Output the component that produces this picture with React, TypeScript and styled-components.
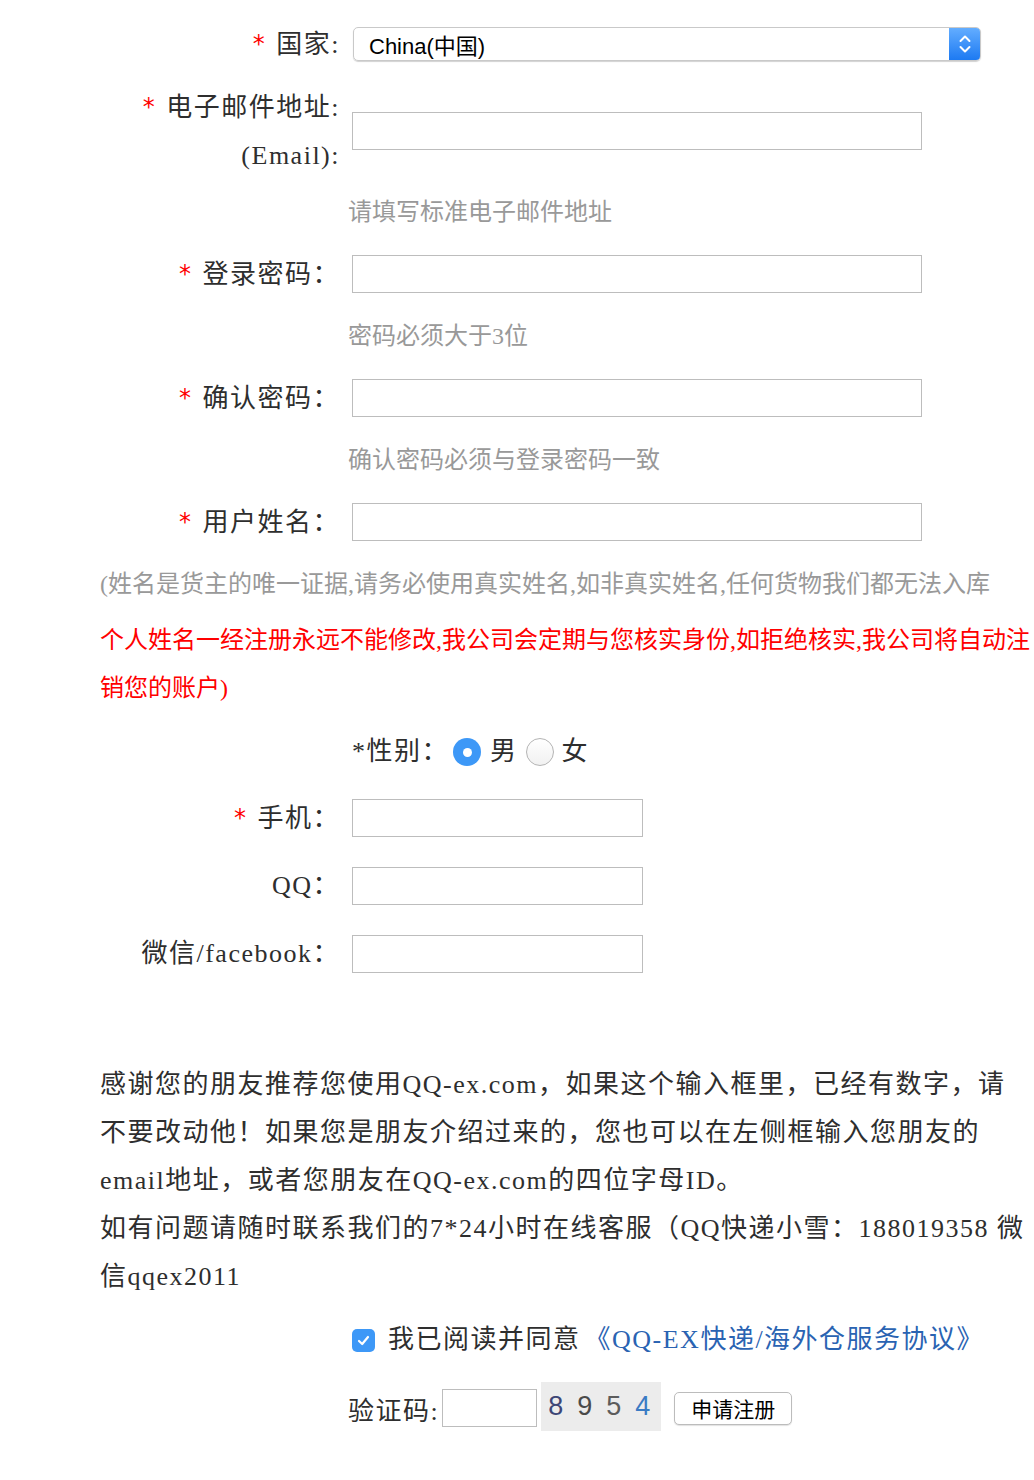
import React from 'react';
import styled, { createGlobalStyle } from 'styled-components';

const SERIF = `"Liberation Serif", "Noto Sans CJK SC", serif`;
const SANS = `"Liberation Sans", "Noto Sans CJK SC", sans-serif`;

const GlobalStyle = createGlobalStyle`
    * { box-sizing: border-box; }
    body {
        margin: 0;
        background: #fff;
        font-family: ${SERIF};
        color: #333;
    }
`;

const Page = styled.div`
    width: 1034px;
    padding: 13px 0 40px;
    display: flex;
    flex-direction: column;
`;

const Row = styled.div<{ $h: number; $pt?: number; $mt?: number }>`
    display: grid;
    grid-template-columns: 340px 1fr;
    column-gap: 12px;
    align-items: center;
    height: ${p => p.$h}px;
    padding-top: ${p => p.$pt || 0}px;
    margin-top: ${p => p.$mt || 0}px;
`;

const Label = styled.div`
    text-align: right;
    font-size: 26px;
    letter-spacing: 1.5px;
    line-height: 48px;
    color: #2e2e2e;
    white-space: nowrap;
`;

const Star = styled.span`
    font-family: "DejaVu Sans", sans-serif;
    font-size: 24px;
    color: #f00;
    margin-right: 10px;
    vertical-align: 1px;
`;

const Field = styled.div`
    grid-column: 2;
    display: flex;
    align-items: center;
`;

const Hint = styled.div`
    grid-column: 2;
    margin-left: -4px;
    font-size: 24px;
    line-height: 48px;
    color: #999;
`;

const TextInput = styled.input<{ $w: number }>`
    width: ${p => p.$w}px;
    height: 38px;
    border: 1px solid #bdbdbd;
    background: #fff;
    padding: 0 6px;
    font-size: 18px;
    outline: none;
`;

const SelectBox = styled.div`
    width: 628px;
    height: 34px;
    margin-left: 1px;
    display: flex;
    align-items: center;
    justify-content: space-between;
    border: 1px solid #c9c9c9;
    border-radius: 5px;
    box-shadow: 0 1px 1px rgba(0, 0, 0, 0.18);
    overflow: hidden;
    font-family: ${SANS};
    font-size: 22px;
    color: #000;
    padding-left: 15px;
`;

const Stepper = styled.span`
    width: 31px;
    height: 100%;
    display: flex;
    align-items: center;
    justify-content: center;
    background: linear-gradient(#63adff, #1d7af2);
`;

const Notes = styled.div`
    margin-top: 7px;
    padding-left: 100px;
    font-size: 24px;
    line-height: 48px;
`;

const NoteText = styled.p<{ $red?: boolean }>`
    margin: 0;
    color: ${p => (p.$red ? '#ff0000' : '#999')};
    & + & {
        margin-top: 8px;
    }
`;

const Choice = styled.div`
    display: flex;
    align-items: center;
    font-size: 26px;
    letter-spacing: 1.5px;
    line-height: 48px;
    color: #2e2e2e;
    white-space: nowrap;
`;

const Radio = styled.span<{ $on?: boolean; $ml: number }>`
    width: 28px;
    height: 28px;
    border-radius: 50%;
    margin: 0 ${p => (p.$on ? 9 : 8)}px 0 ${p => p.$ml}px;
    display: flex;
    align-items: center;
    justify-content: center;
    background: ${p => (p.$on ? '#3d98f7' : 'linear-gradient(#fff, #f1f1f1)')};
    border: ${p => (p.$on ? 'none' : '1px solid #b4b4b4')};
    &::after {
        content: "";
        display: ${p => (p.$on ? 'block' : 'none')};
        width: 9px;
        height: 9px;
        border-radius: 50%;
        background: #fff;
    }
`;

const Para = styled.p`
    margin: 73px 0 0;
    padding-left: 100px;
    font-size: 26px;
    letter-spacing: 1.5px;
    line-height: 48px;
    color: #2e2e2e;
    white-space: nowrap;
`;

const CheckBox = styled.span`
    width: 23px;
    height: 23px;
    border-radius: 5px;
    background: #3d98f7;
    display: flex;
    align-items: center;
    justify-content: center;
    margin-right: 13px;
`;

const AgreeLink = styled.a`
    color: #2a63b2;
    text-decoration: none;
    margin-left: 4px;
`;

const CodeLabel = styled.span`
    margin-left: -4px;
    font-size: 26px;
    letter-spacing: 1.5px;
    color: #2e2e2e;
`;

const CodeInput = styled(TextInput)`
    margin-left: 3px;
`;

const Captcha = styled.div`
    width: 120px;
    height: 49px;
    margin: -3px 0 0 4px;
    background: #ececec;
    display: flex;
    align-items: center;
    gap: 14px;
    padding-left: 7px;
    font-family: ${SANS};
    font-size: 27px;
`;

const Digit = styled.span<{ $c: string }>`
    color: ${p => p.$c};
`;

const Submit = styled.button`
    width: 118px;
    height: 33px;
    margin-left: 13px;
    border: 1px solid #bcbcbc;
    border-radius: 5px;
    background: #fff;
    box-shadow: 0 1px 1px rgba(0, 0, 0, 0.12);
    font-family: ${SANS};
    font-size: 21px;
    color: #000;
    padding: 0;
`;

const App = () => {
    return (
        <>
            <GlobalStyle />
            <Page>
                <Row $h={62}>
                    <Label><Star>*</Star>国家:</Label>
                    <Field>
                        <SelectBox>
                            <span>China(中国)</span>
                            <Stepper>
                                <svg width="14" height="22" viewBox="0 0 14 22" fill="none" stroke="#fff" strokeWidth="2" strokeLinecap="round" strokeLinejoin="round">
                                    <path d="M2.5 8 L7 3.5 L11.5 8" />
                                    <path d="M2.5 14 L7 18.5 L11.5 14" />
                                </svg>
                            </Stepper>
                        </SelectBox>
                    </Field>
                </Row>
                <Row $h={106} $pt={6}>
                    <Label><Star>*</Star>电子邮件地址:<br />(Email):</Label>
                    <Field><TextInput $w={570} /></Field>
                </Row>
                <Row $h={62}>
                    <Hint>请填写标准电子邮件地址</Hint>
                </Row>
                <Row $h={62}>
                    <Label><Star>*</Star>登录密码：</Label>
                    <Field><TextInput $w={570} type="password" /></Field>
                </Row>
                <Row $h={62}>
                    <Hint>密码必须大于3位</Hint>
                </Row>
                <Row $h={62}>
                    <Label><Star>*</Star>确认密码：</Label>
                    <Field><TextInput $w={570} type="password" /></Field>
                </Row>
                <Row $h={62}>
                    <Hint>确认密码必须与登录密码一致</Hint>
                </Row>
                <Row $h={62}>
                    <Label><Star>*</Star>用户姓名：</Label>
                    <Field><TextInput $w={570} /></Field>
                </Row>
                <Notes>
                    <NoteText>(姓名是货主的唯一证据,请务必使用真实姓名,如非真实姓名,任何货物我们都无法入库</NoteText>
                    <NoteText $red>个人姓名一经注册永远不能修改,我公司会定期与您核实身份,如拒绝核实,我公司将自动注销您的账户)</NoteText>
                </Notes>
                <Row $h={64} $mt={8}>
                    <Field>
                        <Choice>
                            *性别：
                            <Radio $on $ml={4} />男
                            <Radio $ml={8} />女
                        </Choice>
                    </Field>
                </Row>
                <Row $h={68}>
                    <Label><Star>*</Star>手机：</Label>
                    <Field><TextInput $w={291} /></Field>
                </Row>
                <Row $h={68}>
                    <Label>QQ：</Label>
                    <Field><TextInput $w={291} /></Field>
                </Row>
                <Row $h={68}>
                    <Label>微信/facebook：</Label>
                    <Field><TextInput $w={291} /></Field>
                </Row>
                <Para>
                    感谢您的朋友推荐您使用QQ-ex.com，如果这个输入框里，已经有数字，请<br />
                    不要改动他！如果您是朋友介绍过来的，您也可以在左侧框输入您朋友的<br />
                    email地址，或者您朋友在QQ-ex.com的四位字母ID。<br />
                    如有问题请随时联系我们的7*24小时在线客服（QQ快递小雪：188019358 微<br />
                    信qqex2011
                </Para>
                <Row $h={60} $mt={9}>
                    <Field>
                        <CheckBox>
                            <svg width="15" height="15" viewBox="0 0 15 15" fill="none" stroke="#fff" strokeWidth="2.2" strokeLinecap="round" strokeLinejoin="round">
                                <path d="M3 8 L6.2 11 L12 4" />
                            </svg>
                        </CheckBox>
                        <Choice>
                            我已阅读并同意<AgreeLink href="#">《QQ-EX快递/海外仓服务协议》</AgreeLink>
                        </Choice>
                    </Field>
                </Row>
                <Row $h={56} $mt={10}>
                    <Field>
                        <CodeLabel>验证码:</CodeLabel>
                        <CodeInput $w={95} />
                        <Captcha>
                            <Digit $c="#3d4676">8</Digit>
                            <Digit $c="#4a4a4a">9</Digit>
                            <Digit $c="#5c5c5c">5</Digit>
                            <Digit $c="#3a7bc4">4</Digit>
                        </Captcha>
                        <Submit>申请注册</Submit>
                    </Field>
                </Row>
            </Page>
        </>
    );
};

export default App;
